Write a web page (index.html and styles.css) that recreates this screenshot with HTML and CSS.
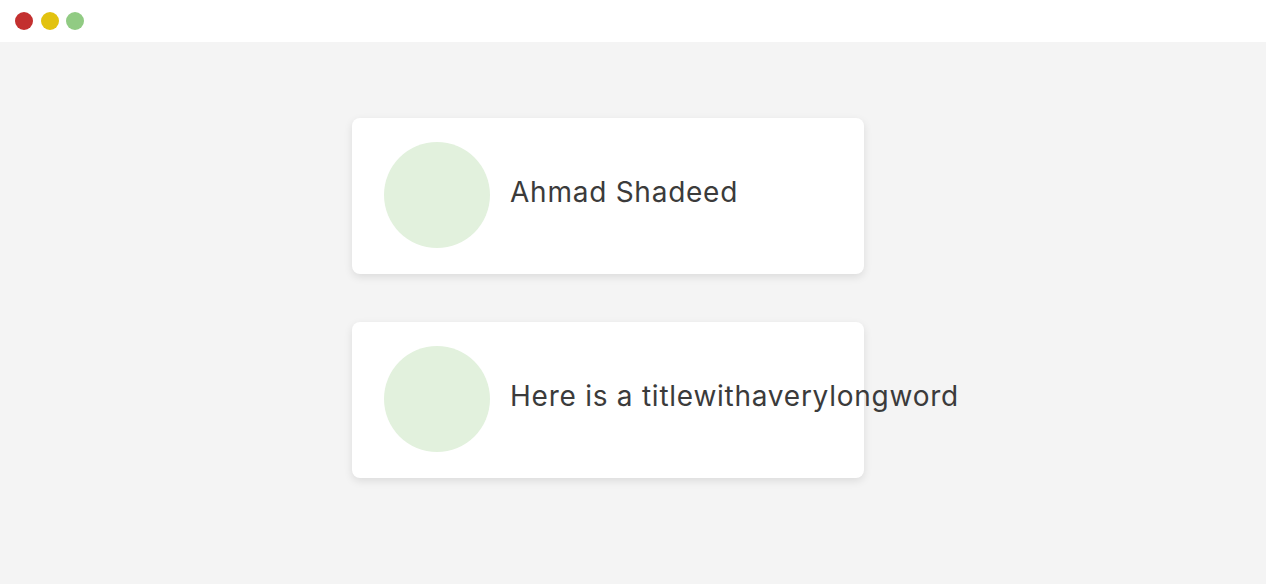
FILE: index.html
```html
<!DOCTYPE html>
<html>
<head>
<meta charset="utf-8">
<link rel="stylesheet" href="styles.css">
</head>
<body>
<header class="topbar">
  <span class="dot dot-red"></span>
  <span class="dot dot-yellow"></span>
  <span class="dot dot-green"></span>
</header>
<main class="main">
  <div class="card">
    <div class="avatar"></div>
    <p class="title">Ahmad Shadeed</p>
  </div>
  <div class="card">
    <div class="avatar"></div>
    <p class="title">Here is a titlewithaverylongword</p>
  </div>
</main>
</body>
</html>
```

FILE: styles.css
```css
* { box-sizing: border-box; }
html, body { margin: 0; padding: 0; }
body {
  background: #f4f4f4;
  font-family: Inter, "Noto Sans", sans-serif;
  height: 584px;
  overflow: hidden;
}
.topbar {
  height: 42px;
  background: #fff;
  display: flex;
  align-items: center;
  gap: 7.5px;
  padding-left: 15px;
}
.dot {
  width: 18px;
  height: 18px;
  border-radius: 50%;
  display: block;
}
.dot-red { background: #c3302f; }
.dot-yellow { background: #e2c20f; }
.dot-green { background: #91cb83; }
.main {
  padding-top: 76px;
  padding-left: 352px;
  display: flex;
  flex-direction: column;
  gap: 48px;
}
.card {
  width: 512px;
  height: 156px;
  background: #fff;
  border-radius: 8px;
  box-shadow: 0 3px 8px rgba(0,0,0,0.1);
  display: flex;
  align-items: center;
  padding: 0 32px;
  gap: 20px;
}
.avatar {
  flex: 0 0 106px;
  width: 106px;
  height: 106px;
  border-radius: 50%;
  background: #e2f1dd;
  margin-top: -2px;
}
.title {
  margin: 0;
  font-size: 28px;
  letter-spacing: 0.75px;
  color: #3b3b3b;
  white-space: nowrap;
  margin-top: -9px;
}
```
